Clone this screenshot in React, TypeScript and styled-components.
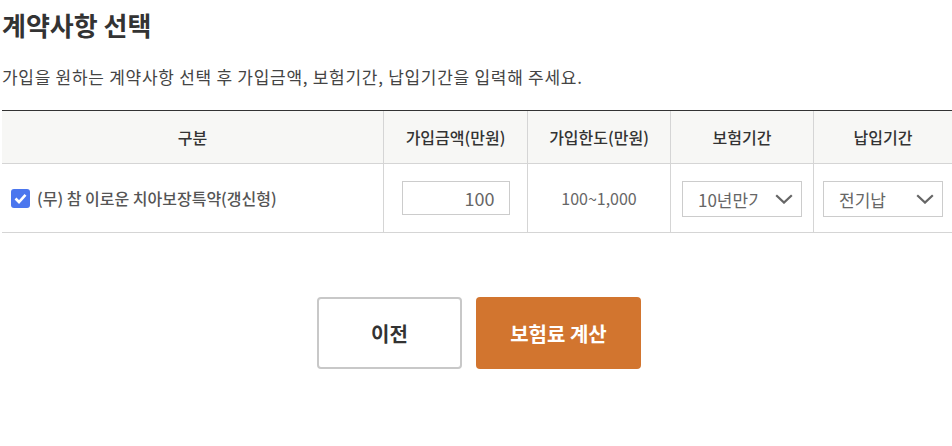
import React from "react";
import styled, { createGlobalStyle } from "styled-components";

const Global = createGlobalStyle`
  html, body { margin: 0; padding: 0; background: #fff; }
  body { font-family: "Noto Sans CJK KR", "Noto Sans", sans-serif; color: #333; }
  * { box-sizing: border-box; }
`;

const Page = styled.div`
  width: 952px;
  padding: 6px 0 0 2px;
`;

const Title = styled.h2`
  margin: 0;
  font-size: 26px;
  font-weight: 700;
  line-height: 38px;
  color: #333;
`;

const Desc = styled.p`
  margin: 20px 0 0;
  font-size: 17px;
  letter-spacing: 0.72px;
  line-height: 26px;
  color: #444;
`;

const Table = styled.div`
  margin-top: 20px;
  border-top: 1px solid #333;
  display: grid;
  grid-template-columns: 381px 144px 143px 143px 1fr;
`;

const Head = styled.div<{ first?: boolean }>`
  height: 53px;
  background: #f7f7f5;
  border-bottom: 1px solid #d5d5d5;
  border-left: ${(p) => (p.first ? "none" : "1px solid #d5d5d5")};
  display: flex;
  align-items: center;
  justify-content: center;
  font-size: 16px;
  font-weight: 500;
  color: #333;
`;

const Cell = styled.div<{ first?: boolean; left?: boolean }>`
  height: 69px;
  border-bottom: 1px solid #d5d5d5;
  border-left: ${(p) => (p.first ? "none" : "1px solid #d5d5d5")};
  display: flex;
  align-items: center;
  justify-content: ${(p) => (p.left ? "flex-start" : "center")};
  padding-left: ${(p) => (p.left ? "9px" : "0")};
  font-size: 16px;
  color: #555;
`;

const Check = styled.span`
  width: 19px;
  height: 19px;
  border-radius: 3px;
  background: #4b76ee;
  display: inline-flex;
  align-items: center;
  justify-content: center;
  margin-right: 7px;
`;

const ItemName = styled.span`
  font-size: 16px;
  font-weight: 500;
  color: #555;
`;

const AmountInput = styled.div`
  width: 108px;
  height: 34px;
  border: 1px solid #ccc;
  display: flex;
  align-items: center;
  justify-content: flex-end;
  padding-right: 14px;
  font-size: 18px;
  color: #666;
`;

const Range = styled.span`
  font-size: 16px;
  color: #666;
`;

const Select = styled.div`
  width: 120px;
  height: 36px;
  margin-top: 2px;
  border: 1px solid #ccc;
  display: flex;
  align-items: center;
  justify-content: space-between;
  padding: 0 8px 0 15px;
  font-size: 17px;
  color: #666;
  overflow: hidden;
`;

const SelectText = styled.span`
  white-space: nowrap;
  overflow: hidden;
  width: 61px;
`;

const Buttons = styled.div`
  display: flex;
  justify-content: center;
  gap: 14px;
  margin-top: 64px;
  padding-left: 4px;
`;

const Btn = styled.button<{ primary?: boolean }>`
  width: ${(p) => (p.primary ? "165px" : "145px")};
  height: 72px;
  border-radius: 4px;
  border: ${(p) => (p.primary ? "none" : "2px solid #c8c8c8")};
  background: ${(p) => (p.primary ? "#d2752f" : "#fff")};
  color: ${(p) => (p.primary ? "#fff" : "#333")};
  font-family: "Noto Sans CJK KR", sans-serif;
  font-size: 20px;
  font-weight: 700;
`;

const Chevron = () => (
  <svg width="18" height="10" viewBox="0 0 18 10">
    <path d="M1.2 1.2 L9 8.6 L16.8 1.2" fill="none" stroke="#666" strokeWidth="2.2" />
  </svg>
);

export default function App() {
  return (
    <Page>
      <Global />
      <Title>계약사항 선택</Title>
      <Desc>가입을 원하는 계약사항 선택 후 가입금액, 보험기간, 납입기간을 입력해 주세요.</Desc>
      <Table>
        <Head first>구분</Head>
        <Head>가입금액(만원)</Head>
        <Head>가입한도(만원)</Head>
        <Head>보험기간</Head>
        <Head>납입기간</Head>
        <Cell first left>
          <Check>
            <svg width="13" height="11" viewBox="0 0 13 11">
              <path d="M1.5 5.5 L5 9 L11.5 1.8" fill="none" stroke="#fff" strokeWidth="2.6" />
            </svg>
          </Check>
          <ItemName>(무) 참 이로운 치아보장특약(갱신형)</ItemName>
        </Cell>
        <Cell>
          <AmountInput>100</AmountInput>
        </Cell>
        <Cell>
          <Range>100~1,000</Range>
        </Cell>
        <Cell>
          <Select>
            <SelectText>10년만기</SelectText>
            <Chevron />
          </Select>
        </Cell>
        <Cell>
          <Select>
            <SelectText>전기납</SelectText>
            <Chevron />
          </Select>
        </Cell>
      </Table>
      <Buttons>
        <Btn>이전</Btn>
        <Btn primary>보험료 계산</Btn>
      </Buttons>
    </Page>
  );
}
